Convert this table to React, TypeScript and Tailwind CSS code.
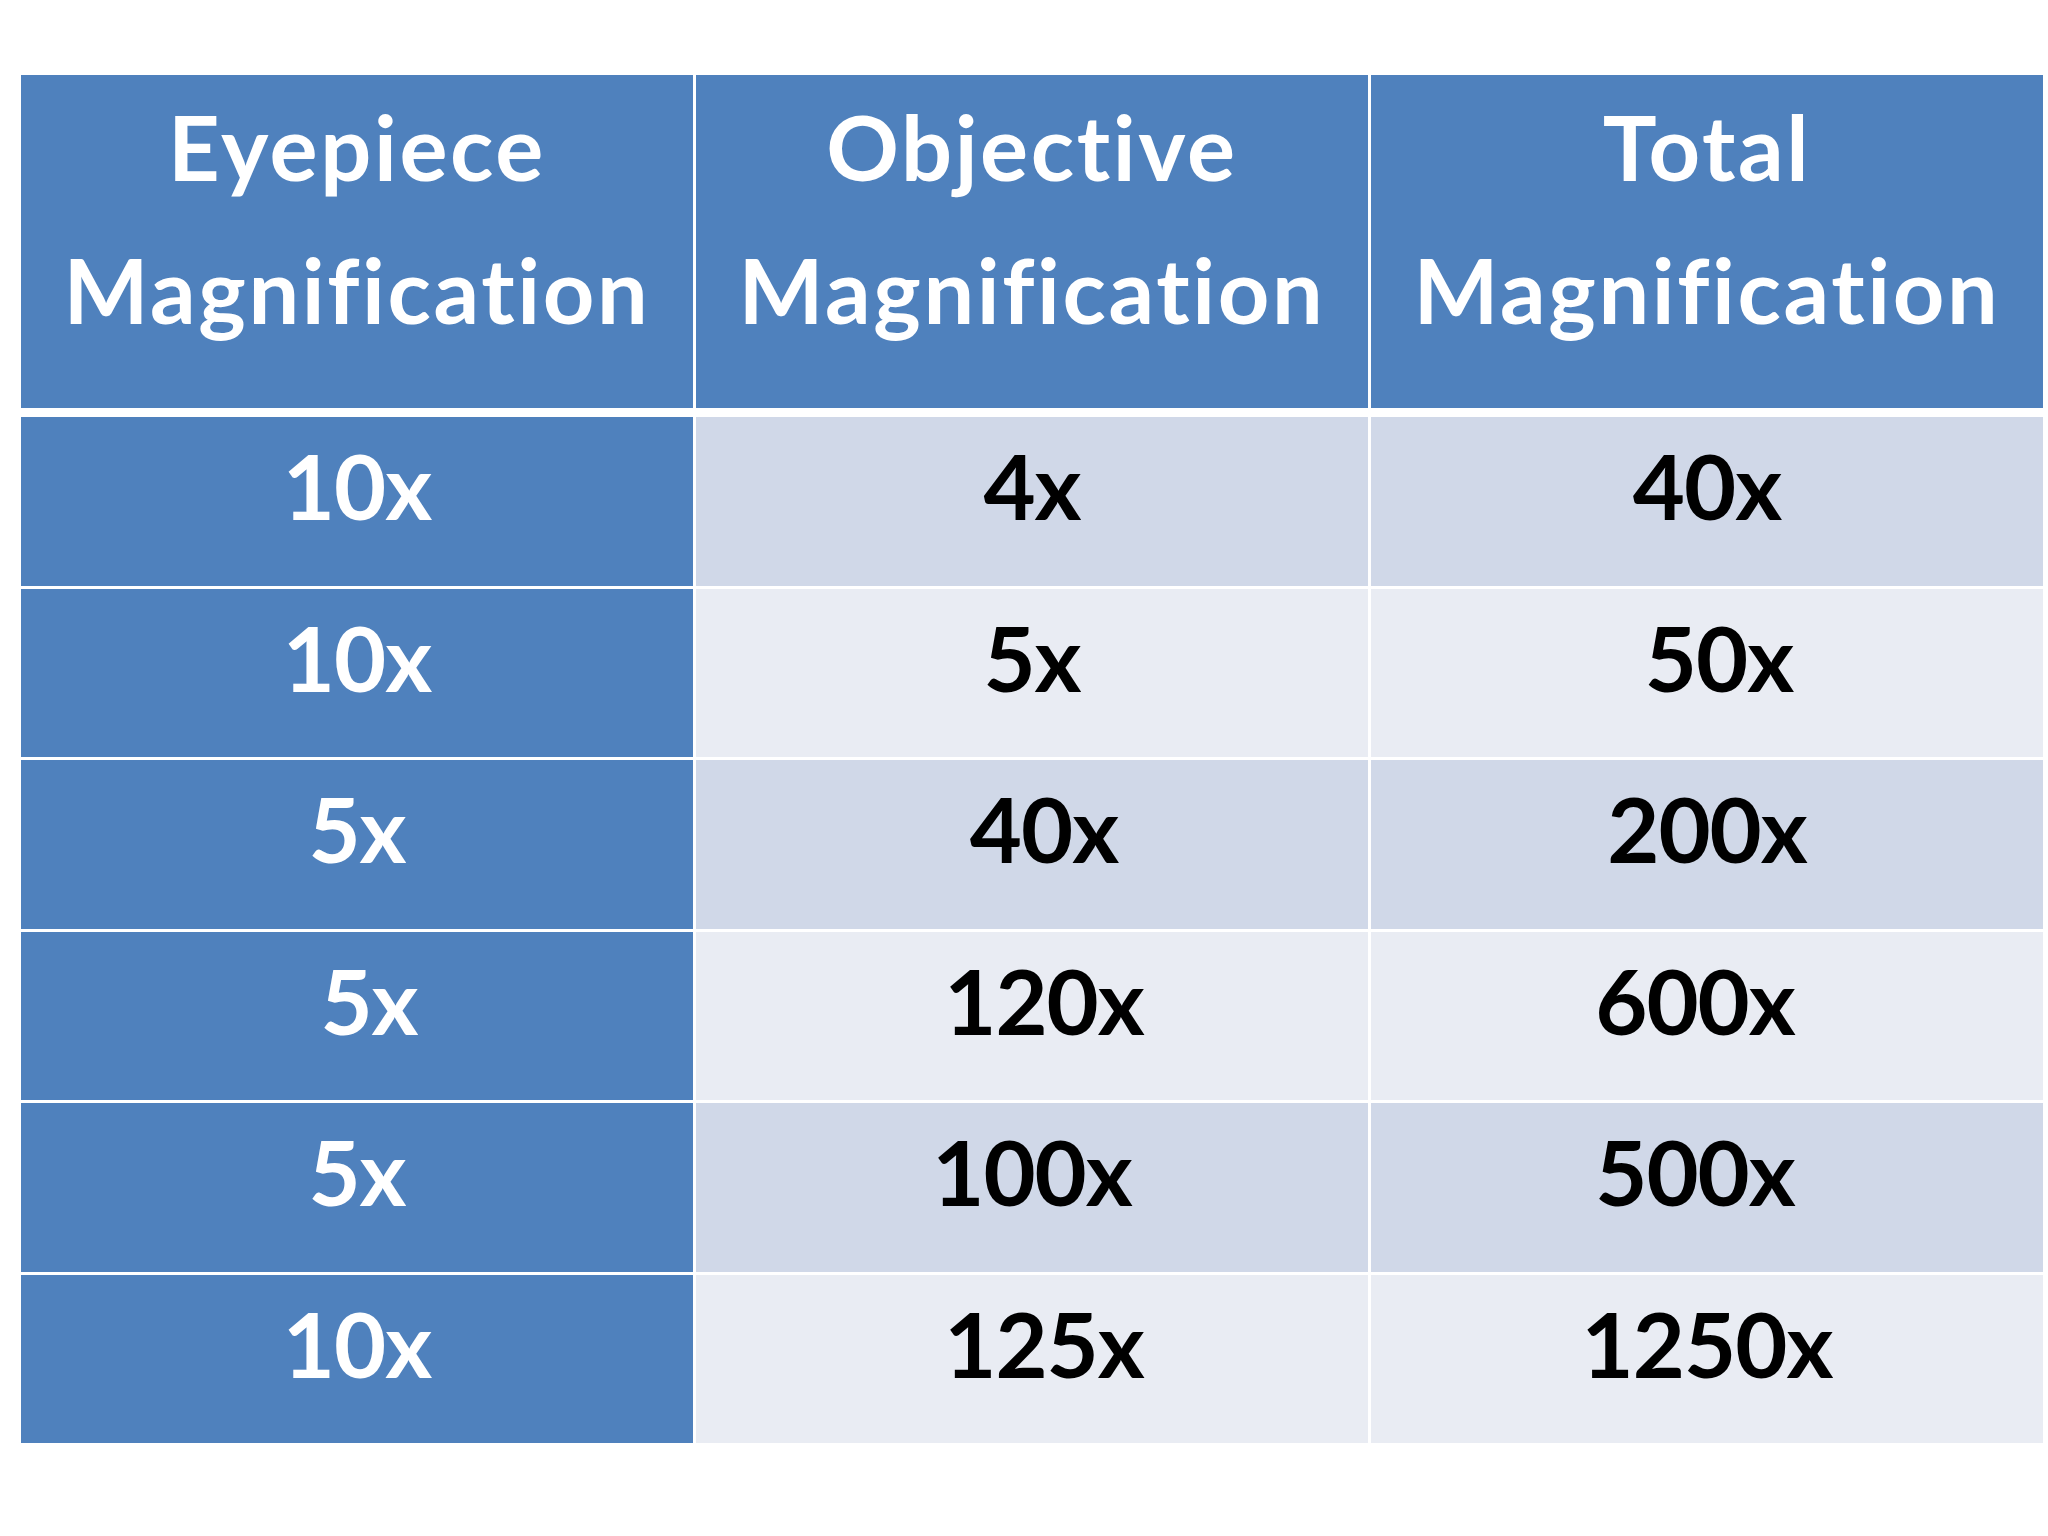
const font = { fontFamily: "Lato, 'Open Sans', sans-serif" };

type Cell = { text: string; shift?: "l" | "r" };

const rows: Cell[][] = [
  [{ text: "10x" }, { text: "4x" }, { text: "40x" }],
  [{ text: "10x" }, { text: "5x" }, { text: "50x", shift: "l" }],
  [{ text: "5x" }, { text: "40x", shift: "l" }, { text: "200x" }],
  [{ text: "5x", shift: "l" }, { text: "120x", shift: "l" }, { text: "600x", shift: "r" }],
  [{ text: "5x" }, { text: "100x" }, { text: "500x", shift: "r" }],
  [{ text: "10x" }, { text: "125x", shift: "l" }, { text: "1250x" }],
];

const headers = [
  ["Eyepiece", "Magnification"],
  ["Objective", "Magnification"],
  ["Total", "Magnification"],
];

function shiftClass(s?: "l" | "r") {
  if (s === "l") return "pl-[24px]";
  if (s === "r") return "pr-[24px]";
  return "";
}

export default function App() {
  return (
    <div className="w-[2048px] h-[1536px] bg-white pt-[75px] pl-[21px]" style={font}>
      <div className="grid grid-cols-[672px_672px_672px] gap-x-[3px] h-[333px]">
        {headers.map((h) => (
          <div
            key={h[0]}
            className="bg-[#4f81bd] flex flex-col items-center text-white font-bold text-[90px] leading-[143px] tracking-[2.6px]"
          >
            {h.map((line) => (
              <span key={line}>{line}</span>
            ))}
          </div>
        ))}
      </div>

      <div className="mt-[9px] grid grid-cols-[672px_672px_672px] grid-rows-6 gap-x-[3px] gap-y-[3px] h-[1026px]">
        {rows.map((r, i) =>
          r.map((c, j) => {
            const bg =
              j === 0 ? "bg-[#4f81bd] text-white" : i % 2 === 0 ? "bg-[#d0d8e8] text-black" : "bg-[#e9ecf3] text-black";
            return (
              <div
                key={`${i}-${j}`}
                className={`${bg} flex items-center justify-center pb-[32px] font-bold text-[90px] leading-none tracking-[-1px] ${shiftClass(c.shift)}`}
              >
                {c.text}
              </div>
            );
          })
        )}
      </div>
    </div>
  );
}
